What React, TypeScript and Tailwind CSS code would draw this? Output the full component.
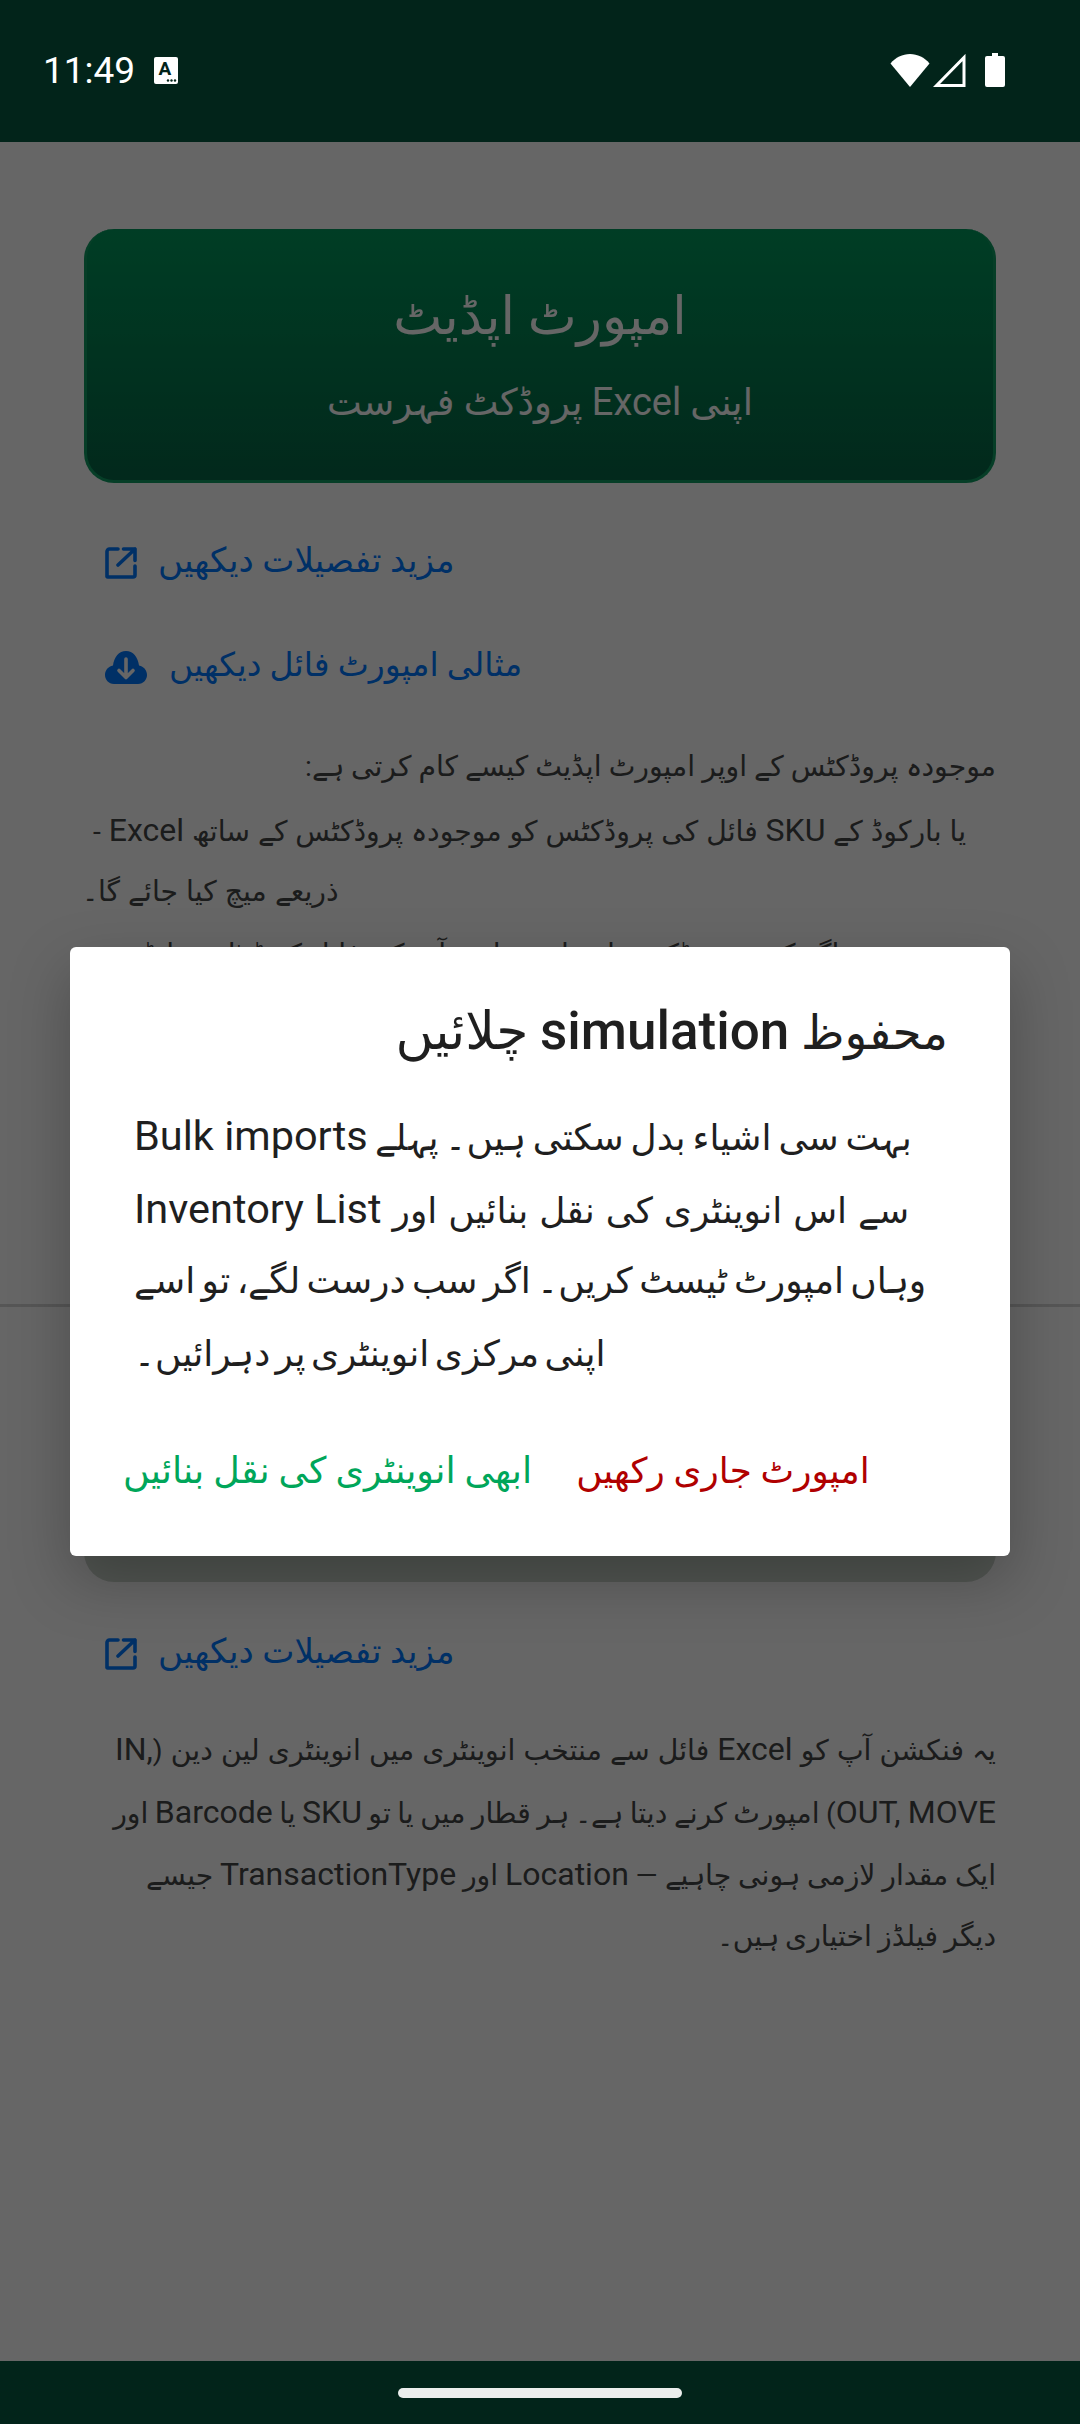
import React from "react";

const FONT = "[font-family:Roboto,'DejaVu_Sans',sans-serif]";

function ExternalIcon() {
  return (
    <svg viewBox="0 0 32 32" className="w-8 h-8 shrink-0" fill="none" stroke="#0078ff" strokeWidth="3.6" strokeLinecap="round" strokeLinejoin="round">
      <path d="M13 2H4.500A2.500 2.500 0 0 0 2 4.500v25A1 1 0 0 0 3 30h25a2 2 0 0 0 2-2V19" />
      <path d="M18.500 2H30v11.500M30 2 13 18" />
    </svg>
  );
}

function CloudIcon() {
  return (
    <svg viewBox="0 0 42 33" className="w-[42px] h-[33px] shrink-0">
      <path d="M9 33C3.500 33 0 28.500 0 24c0-4.800 3.200-8.500 8-9.500C9 6 14 0 21 0s12 6 13 14.500c4.800 1 8 4.700 8 9.500 0 4.500-3.500 9-9 9z" fill="#0078ff" />
      <path d="M21 8v18M14 19.500 21 26.500l7-7" fill="none" stroke="#fff" strokeWidth="3.600" strokeLinecap="round" strokeLinejoin="round" />
    </svg>
  );
}

function LinkRow({ label, icon, gap, size }: { label: string; icon: React.ReactNode; gap: string; size: string }) {
  return (
    <div className={`h-[104px] flex items-center ${gap} pl-[21px]`}>
      {icon}
      <span dir="rtl" className={`${size} leading-none text-[#0078ff] -translate-y-[3px]`}>{label}</span>
    </div>
  );
}

function L({ children }: { children: React.ReactNode }) {
  return <span dir="ltr" className="text-[32px]">{children}</span>;
}

function DL({ children }: { children: React.ReactNode }) {
  return <span dir="ltr" className="text-[41.5px] [word-spacing:0px]">{children}</span>;
}

function Line({ children, right, sp = "" }: { children: React.ReactNode; right?: boolean; sp?: string }) {
  return (
    <div className={`h-[62.5px] flex items-center ${right ? "justify-end" : "justify-start"}`}>
      <span dir="rtl" className={`whitespace-nowrap ${sp}`}>{children}</span>
    </div>
  );
}

function DLine({ children, sp = "" }: { children: React.ReactNode; sp?: string }) {
  return (
    <div className="h-[72.6px] flex items-center justify-start">
      <span dir="rtl" className={`whitespace-nowrap ${sp}`}>{children}</span>
    </div>
  );
}

export default function App() {
  return (
    <div className={`${FONT} w-[1080px] h-[2424px] flex flex-col bg-[#02241a] overflow-hidden`}>
      <div className="h-[142px] shrink-0 flex items-center justify-between pl-[43px] pr-[75px] text-white pb-[2px]">
        <div className="flex items-center gap-[19px]">
          <span className="text-[37px] leading-none font-[Roboto]">11:49</span>
          <svg viewBox="0 0 24 27" className="w-6 h-[27px]">
            <rect width="24" height="27" rx="2" fill="#fff" />
            <text x="11" y="18" textAnchor="middle" fontSize="19" fontWeight="700" fontFamily="Roboto" fill="#02241a">A</text>
            <circle cx="14" cy="23.500" r="1.200" fill="#02241a" />
            <circle cx="17.500" cy="23.500" r="1.200" fill="#02241a" />
            <circle cx="21" cy="23.500" r="1.200" fill="#02241a" />
          </svg>
        </div>
        <div className="flex items-center">
          <svg viewBox="0 0 40 33" className="w-10 h-[33px]">
            <path d="M20 33 0.500 9.500C5.500 3.500 12.500 0 20 0s14.500 3.500 19.500 9.500z" fill="#fff" />
          </svg>
          <svg viewBox="0 0 33 33" className="w-[33px] h-[33px] ml-[3px]">
            <path d="M31 3.500V31.500H3.500z" fill="none" stroke="#fff" strokeWidth="3" />
          </svg>
          <svg viewBox="0 0 20 34" className="w-5 h-[34px] ml-[19px]">
            <path d="M7 0h6v3h5a2 2 0 0 1 2 2v27a2 2 0 0 1-2 2H2a2 2 0 0 1-2-2V5a2 2 0 0 1 2-2h5z" fill="#fff" />
          </svg>
        </div>
      </div>

      <div className="relative flex-1 bg-white overflow-hidden">
        <div className="px-[84px] pt-[87px] text-[#454647]">
          <div className="h-[254px] rounded-[30px] bg-gradient-to-b from-[#009a5c] to-[#056646] border-x-[3px] border-b-[3px] border-[#109c63] flex flex-col items-center text-white">
            <span dir="rtl" className="mt-[62px] text-[52px] leading-none">امپورٹ اپڈیٹ</span>
            <span dir="rtl" className="mt-[40px] text-[37px] leading-none">اپنی <span dir="ltr" className="text-[38px]">Excel</span> پروڈکٹ فہرست</span>
          </div>
          <div className="mt-[28px]">
            <LinkRow label="مزید تفصیلات دیکھیں" icon={<ExternalIcon />} gap="gap-[21px]" size="text-[34.200px]" />
            <LinkRow label="مثالی امپورٹ فائل دیکھیں" icon={<CloudIcon />} gap="gap-[22px]" size="text-[33px]" />
          </div>
          <div className="mt-[17px] h-[568px] text-[28.300px]">
            <Line right>موجودہ پروڈکٹس کے اوپر امپورٹ اپڈیٹ کیسے کام کرتی ہے:</Line>
            <div className="pl-[9px]"><Line sp="[word-spacing:0.900px]">یا بارکوڈ کے <L>SKU</L> فائل کی پروڈکٹس کو موجودہ پروڈکٹس کے ساتھ <L>Excel</L> -</Line></div>
            <div className="-ml-[2px]"><Line sp="[word-spacing:1px]">ذریعے میچ کیا جائے گا۔</Line></div>
            <div className="pl-[9px]"><Line>اگر کوئی پروڈکٹ مل جائے تو اسے آپ کی فائل کے ڈیٹا سے اپڈیٹ -</Line></div>
          </div>
        </div>
        <div className="h-[3px] bg-[#d8d8d8]" />
        <div className="px-[84px] text-[#454647]">
          <div className="mt-[45px] h-[230px] rounded-[30px] bg-[#ced6ce]" />
          <div className="mt-[20px]">
            <LinkRow label="مزید تفصیلات دیکھیں" icon={<ExternalIcon />} gap="gap-[21px]" size="text-[34.200px]" />
          </div>
          <div className="mt-[12px] text-[28.300px]">
            <Line right sp="[word-spacing:1.100px]">یہ فنکشن آپ کو <L>Excel</L> فائل سے منتخب انوینٹری میں انوینٹری لین دین (<L>IN,</L></Line>
            <Line right sp="[word-spacing:-0.600px]"><L>OUT, MOVE</L>) امپورٹ کرنے دیتا ہے۔ ہر قطار میں یا تو <L>SKU</L> یا <L>Barcode</L> اور</Line>
            <Line right sp="[word-spacing:-0.200px]">ایک مقدار لازمی ہونی چاہیے — <L>Location</L> اور <L>TransactionType</L> جیسے</Line>
            <Line right sp="[word-spacing:-0.800px]">دیگر فیلڈز اختیاری ہیں۔</Line>
          </div>
        </div>

        <div className="absolute inset-0 bg-black/60 flex items-center justify-center">
          <div className="w-[940px] h-[609px] bg-white rounded-[6px] shadow-[0_24px_60px_rgba(0,0,0,0.25)] flex flex-col text-[#1f1f1f]">
            <div dir="rtl" className="pt-[57px] pr-[62px] h-[150px] text-[47px] leading-[54px] whitespace-nowrap">
              محفوظ <span dir="ltr" className="font-medium text-[53px]">simulation</span> <span className="text-[52px]">چلائیں</span>
            </div>
            <div className="pl-[64px] pt-[3px] text-[36px]">
              <DLine sp="[word-spacing:-2px]">بہت سی اشیاء بدل سکتی ہیں۔ پہلے <DL>Bulk imports</DL></DLine>
              <DLine sp="[word-spacing:2px]">سے اس انوینٹری کی نقل بنائیں اور <DL>Inventory List</DL></DLine>
              <DLine sp="[word-spacing:-2.500px]">وہاں امپورٹ ٹیسٹ کریں۔ اگر سب درست لگے، تو اسے</DLine>
              <DLine sp="[word-spacing:-3.500px]">اپنی مرکزی انوینٹری پر دہرائیں۔</DLine>
            </div>
            <div className="mt-[54px] pl-[53px] flex items-center gap-[44px]">
              <span dir="rtl" className="text-[36.500px] text-[#00a65a]">ابھی انوینٹری کی نقل بنائیں</span>
              <span dir="rtl" className="text-[35.700px] text-[#b00000]">امپورٹ جاری رکھیں</span>
            </div>
          </div>
        </div>
      </div>

      <div className="h-[63px] shrink-0 flex justify-center pt-[27px]">
        <div className="w-[284px] h-[10px] rounded-full bg-[#eceeed]" />
      </div>
    </div>
  );
}
